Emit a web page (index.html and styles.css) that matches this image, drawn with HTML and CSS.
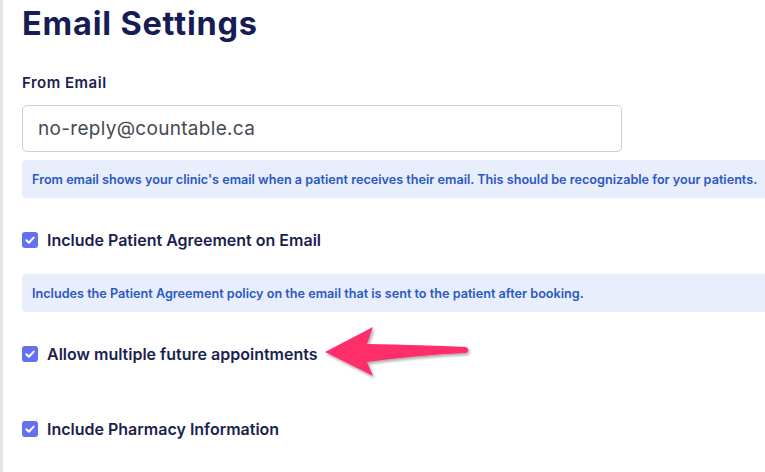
FILE: index.html
```html
<!DOCTYPE html>
<html>
<head>
<meta charset="utf-8">
<link rel="stylesheet" href="styles.css">
</head>
<body>
<div class="page">
  <main class="content">
    <h1 class="title">Email Settings</h1>
    <label class="field-label">From Email</label>
    <div class="input">no-reply@countable.ca</div>
    <div class="info info-first">From email shows your clinic's email when a patient receives their email. This should be recognizable for your patients.</div>

    <div class="check-row row-1">
      <span class="checkbox"><svg viewBox="0 0 16 16" width="16" height="16"><path d="M4.3 8.3 L6.9 10.8 L11.7 5.6" fill="none" stroke="#fff" stroke-width="2" stroke-linecap="round" stroke-linejoin="round"/></svg></span>
      <span class="check-label">Include Patient Agreement on Email</span>
    </div>
    <div class="info info-second">Includes the Patient Agreement policy on the email that is sent to the patient after booking.</div>

    <div class="check-row row-2">
      <span class="checkbox"><svg viewBox="0 0 16 16" width="16" height="16"><path d="M4.3 8.3 L6.9 10.8 L11.7 5.6" fill="none" stroke="#fff" stroke-width="2" stroke-linecap="round" stroke-linejoin="round"/></svg></span>
      <span class="check-label">Allow multiple future appointments</span>
    </div>

    <div class="check-row row-3">
      <span class="checkbox"><svg viewBox="0 0 16 16" width="16" height="16"><path d="M4.3 8.3 L6.9 10.8 L11.7 5.6" fill="none" stroke="#fff" stroke-width="2" stroke-linecap="round" stroke-linejoin="round"/></svg></span>
      <span class="check-label">Include Pharmacy Information</span>
    </div>
  </main>
  <svg class="arrow" width="765" height="472" viewBox="0 0 765 472">
    <defs>
      <filter id="sh" x="-20%" y="-50%" width="140%" height="200%">
        <feDropShadow dx="1.5" dy="2" stdDeviation="1.5" flood-color="#000" flood-opacity="0.35"/>
      </filter>
    </defs>
    <path d="M325,352 L373,327 L367,344 Q420,345 466,347 Q471,350 466,353 Q420,355 367,362 L373,376 Z" fill="#fd2d6b" filter="url(#sh)"/>
  </svg>
</div>
</body>
</html>
```
FILE: styles.css
```css
html, body {
  margin: 0;
  padding: 0;
  background: #fff;
}
.page {
  position: relative;
  width: 765px;
  height: 472px;
  overflow: hidden;
  border-left: 3px solid #e4e4e6;
  box-sizing: border-box;
}
.content {
  padding-left: 19px;
  font-family: "Inter", "Liberation Sans", sans-serif;
  color: #1b1f4e;
}
.title {
  margin: 0;
  padding-top: 4px;
  font-family: "Inter", sans-serif;
  font-weight: 700;
  font-size: 32.5px;
  line-height: 40px;
  color: #161c55;
  letter-spacing: 0.8px;
}
.field-label {
  display: block;
  margin-top: 29px;
  font-size: 15px;
  font-weight: 600;
  line-height: 20px;
  letter-spacing: 0.5px;
  color: #1b1f4e;
}
.input {
  margin-top: 12px;
  width: 600px;
  height: 47px;
  box-sizing: border-box;
  border: 1px solid #cfd0d6;
  border-radius: 5px;
  padding-left: 15px;
  display: flex;
  align-items: center;
  font-size: 19px;
  letter-spacing: 0.3px;
  color: #464a52;
}
.info {
  height: 38px;
  box-sizing: border-box;
  background: #e8eefb;
  border-radius: 4px 0 0 4px;
  padding-left: 10px;
  display: flex;
  align-items: center;
  font-size: 12.65px;
  font-weight: 600;
  color: #2b58c4;
  white-space: nowrap;
  margin-right: -10px;
}
.info-first { margin-top: 8px; }
.info-second { margin-top: 24px; }
.check-row {
  display: flex;
  align-items: center;
  gap: 9px;
  height: 20px;
}
.row-1 { margin-top: 32px; }
.row-2 { margin-top: 32px; }
.row-3 { margin-top: 55px; }
.checkbox {
  width: 16px;
  height: 16px;
  border-radius: 3px;
  background: #6271f0;
  display: flex;
}
.check-label {
  font-size: 16px;
  font-weight: 600;
  color: #1b1f4e;
}
.arrow {
  position: absolute;
  left: -3px;
  top: 0;
  pointer-events: none;
}
```
